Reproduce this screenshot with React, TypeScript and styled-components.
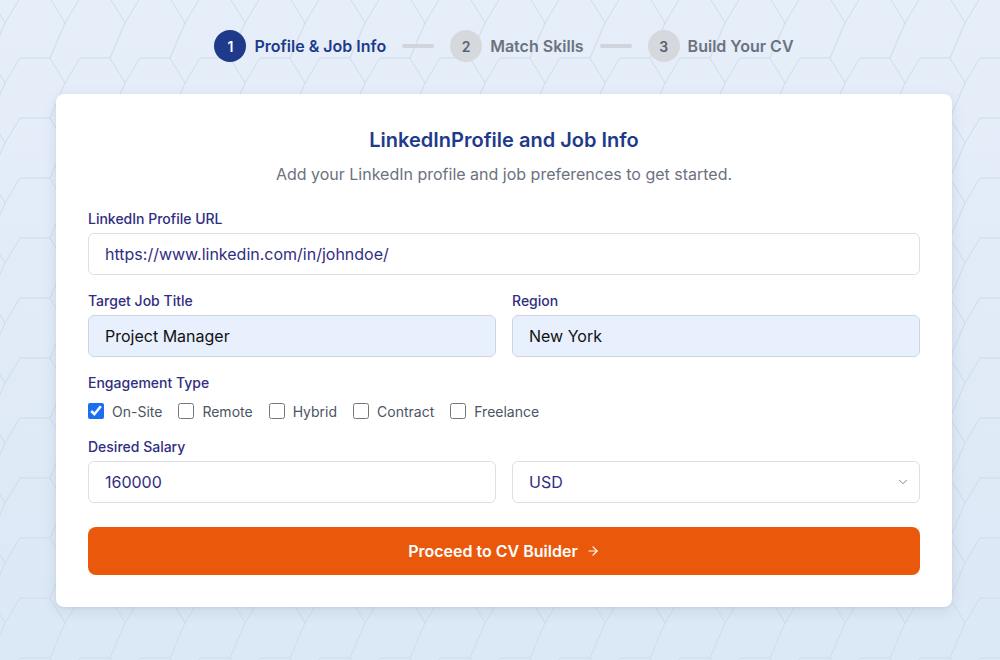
import React from "react";
import styled, { createGlobalStyle } from "styled-components";
import { ArrowRight, ChevronDown } from "lucide-react";

const hexSvg = `<svg xmlns='http://www.w3.org/2000/svg' width='60' height='60' viewBox='0 0 60 60'><path d='M0 25 H30 L45 50 L60 25 M45 50 L40.714 60 M40.714 0 L30 25' fill='none' stroke='#cfdbe9' stroke-width='1'/></svg>`;
const hexUrl = `url("data:image/svg+xml,${encodeURIComponent(hexSvg)}")`;

const GlobalStyle = createGlobalStyle`
  html, body { margin: 0; padding: 0; }
  body {
    font-family: Inter, "Noto Sans", "Liberation Sans", sans-serif;
    background-color: #e2ecf7;
    background-image: ${hexUrl}, linear-gradient(180deg, #e6eef9 0%, #dbe8f5 100%);
    background-position: 20px 33px, 0 0;
    background-repeat: repeat, no-repeat;
    min-height: 660px;
  }
  * { box-sizing: border-box; }
`;

const Page = styled.div`
  display: flex;
  flex-direction: column;
  align-items: center;
  padding: 30px 0 0 8px;
  min-height: 660px;
`;

const Stepper = styled.div`
  display: flex;
  align-items: center;
  gap: 16px;
  height: 32px;
`;

const Step = styled.div`
  display: flex;
  align-items: center;
  gap: 8px;
`;

const StepCircle = styled.div<{ $active?: boolean }>`
  width: 32px;
  height: 32px;
  border-radius: 50%;
  display: flex;
  align-items: center;
  justify-content: center;
  font-size: 14px;
  font-weight: 600;
  background: ${(p) => (p.$active ? "#1e3a8a" : "#d5d8dd")};
  color: ${(p) => (p.$active ? "#ffffff" : "#5b6270")};
`;

const StepLabel = styled.span<{ $active?: boolean }>`
  font-size: 16px;
  font-weight: 600;
  color: ${(p) => (p.$active ? "#1e3a8a" : "#6b7280")};
`;

const Connector = styled.div`
  width: 32px;
  height: 4px;
  border-radius: 2px;
  background: #d1d5db;
`;

const Card = styled.div`
  margin-top: 32px;
  width: 896px;
  background: #ffffff;
  border-radius: 8px;
  box-shadow: 0 4px 14px rgba(30, 58, 110, 0.1), 0 1px 3px rgba(0, 0, 0, 0.05);
  padding: 32px;
  display: flex;
  flex-direction: column;
`;

const Title = styled.h2`
  margin: 0;
  text-align: center;
  font-size: 20px;
  line-height: 28px;
  font-weight: 600;
  color: #1e3a8a;
`;

const Subtitle = styled.p`
  margin: 8px 0 23px;
  text-align: center;
  font-size: 16px;
  line-height: 24px;
  color: #6b7280;
`;

const Field = styled.div`
  display: flex;
  flex-direction: column;
  min-width: 0;
`;

const Label = styled.label`
  font-size: 14px;
  line-height: 20px;
  font-weight: 500;
  color: #312e81;
  margin-bottom: 4px;
`;

const Row = styled.div`
  display: grid;
  grid-template-columns: 1fr 1fr;
  gap: 16px;
  margin-top: 16px;
`;

const Section = styled.div`
  margin-top: 16px;
  display: flex;
  flex-direction: column;
`;

const TextInput = styled.input<{ $filled?: boolean }>`
  height: 42px;
  width: 100%;
  padding: 0 16px;
  font-family: inherit;
  font-size: 16px;
  border-radius: 6px;
  outline: none;
  border: 1px solid ${(p) => (p.$filled ? "#c9d5e6" : "#dcdfe4")};
  background: ${(p) => (p.$filled ? "#e8f0fe" : "#ffffff")};
  color: ${(p) => (p.$filled ? "#111111" : "#312e81")};
`;

const SelectWrap = styled.div`
  position: relative;
`;

const Select = styled.select`
  height: 42px;
  width: 100%;
  padding: 0 16px;
  font-family: inherit;
  font-size: 16px;
  border-radius: 6px;
  border: 1px solid #dcdfe4;
  background: #ffffff;
  color: #312e81;
  appearance: none;
  outline: none;
`;

const Chevron = styled(ChevronDown)`
  position: absolute;
  right: 10px;
  top: 14px;
  color: #6b7280;
  pointer-events: none;
`;

const CheckRow = styled.div`
  display: flex;
  align-items: center;
  gap: 16px;
  height: 20px;
  margin-top: 4px;
`;

const CheckItem = styled.label`
  display: flex;
  align-items: center;
  gap: 8px;
  font-size: 14px;
  color: #4b5563;
`;

const Checkbox = styled.input`
  width: 16px;
  height: 16px;
  margin: 0;
  accent-color: #1a6ef0;
`;

const Button = styled.button`
  margin-top: 24px;
  height: 48px;
  width: 100%;
  border: none;
  border-radius: 8px;
  background: #ea580c;
  color: #ffffff;
  font-family: inherit;
  font-size: 16px;
  font-weight: 600;
  display: flex;
  align-items: center;
  justify-content: center;
  gap: 8px;
  cursor: pointer;
`;

const engagement = [
  { label: "On-Site", checked: true },
  { label: "Remote", checked: false },
  { label: "Hybrid", checked: false },
  { label: "Contract", checked: false },
  { label: "Freelance", checked: false },
];

export default function App() {
  return (
    <>
      <GlobalStyle />
      <Page>
        <Stepper>
          <Step>
            <StepCircle $active>1</StepCircle>
            <StepLabel $active>Profile &amp; Job Info</StepLabel>
          </Step>
          <Connector />
          <Step>
            <StepCircle>2</StepCircle>
            <StepLabel>Match Skills</StepLabel>
          </Step>
          <Connector />
          <Step>
            <StepCircle>3</StepCircle>
            <StepLabel>Build Your CV</StepLabel>
          </Step>
        </Stepper>

        <Card>
          <Title>LinkedInProfile and Job Info</Title>
          <Subtitle>Add your LinkedIn profile and job preferences to get started.</Subtitle>

          <Field>
            <Label>LinkedIn Profile URL</Label>
            <TextInput defaultValue="https://www.linkedin.com/in/johndoe/" />
          </Field>

          <Row>
            <Field>
              <Label>Target Job Title</Label>
              <TextInput $filled defaultValue="Project Manager" />
            </Field>
            <Field>
              <Label>Region</Label>
              <TextInput $filled defaultValue="New York" />
            </Field>
          </Row>

          <Section>
            <Label>Engagement Type</Label>
            <CheckRow>
              {engagement.map((e) => (
                <CheckItem key={e.label}>
                  <Checkbox type="checkbox" defaultChecked={e.checked} />
                  {e.label}
                </CheckItem>
              ))}
            </CheckRow>
          </Section>

          <Section>
            <Label>Desired Salary</Label>
            <Row style={{ marginTop: 0 }}>
              <TextInput defaultValue="160000" />
              <SelectWrap>
                <Select defaultValue="USD">
                  <option>USD</option>
                  <option>EUR</option>
                  <option>GBP</option>
                </Select>
                <Chevron size={14} strokeWidth={1.5} />
              </SelectWrap>
            </Row>
          </Section>

          <Button>
            Proceed to CV Builder <ArrowRight size={14} strokeWidth={2} />
          </Button>
        </Card>
      </Page>
    </>
  );
}
